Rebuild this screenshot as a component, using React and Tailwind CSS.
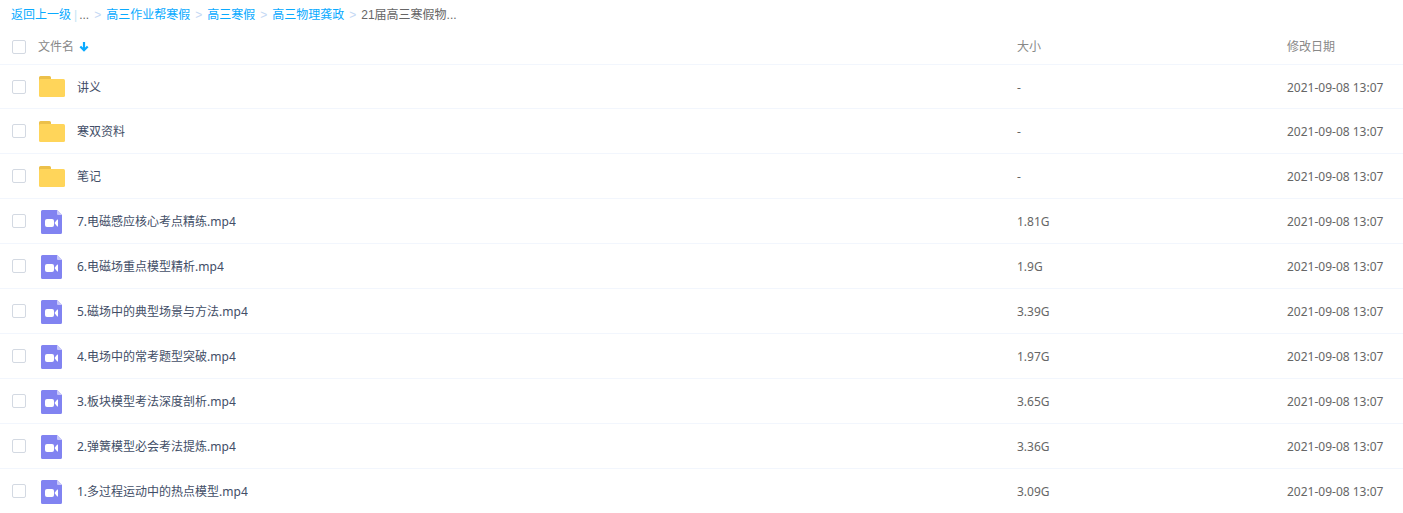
const crumbs = ["高三作业帮寒假", "高三寒假", "高三物理龚政"];

const files = [
  { name: "讲义", type: "folder", size: "-" },
  { name: "寒双资料", type: "folder", size: "-" },
  { name: "笔记", type: "folder", size: "-" },
  { name: "7.电磁感应核心考点精练.mp4", type: "video", size: "1.81G" },
  { name: "6.电磁场重点模型精析.mp4", type: "video", size: "1.9G" },
  { name: "5.磁场中的典型场景与方法.mp4", type: "video", size: "3.39G" },
  { name: "4.电场中的常考题型突破.mp4", type: "video", size: "1.97G" },
  { name: "3.板块模型考法深度剖析.mp4", type: "video", size: "3.65G" },
  { name: "2.弹簧模型必会考法提炼.mp4", type: "video", size: "3.36G" },
  { name: "1.多过程运动中的热点模型.mp4", type: "video", size: "3.09G" },
];

const FolderIcon = () => (
  <svg width="26" height="21" viewBox="0 0 26 21" aria-hidden="true">
    <path d="M0 1.5A1.5 1.5 0 0 1 1.5 0h9A1.5 1.5 0 0 1 12 1.5V6H0z" fill="#ecc04a" />
    <rect y="3" width="26" height="18" rx="1.5" fill="#ffd55a" />
  </svg>
);

const VideoIcon = () => (
  <svg width="22" height="26" viewBox="0 -2 22 26" aria-hidden="true">
    <path d="M1.500 0H16l5 5v17.500a1.500 1.500 0 0 1-1.500 1.500h-18A1.500 1.500 0 0 1 0 22.500v-21A1.500 1.500 0 0 1 1.500 0z" fill="#8183f1" />
    <path d="M16 0l5 5h-4a1 1 0 0 1-1-1z" fill="#c9c9fa" />
    <rect x="4" y="9" width="9" height="8" rx="2" fill="#fff" />
    <path d="M13.500 13L16 9.800c.4-.5 1-.3 1 .3v5.800c0 .6-.6.8-1 .3z" fill="#fff" />
  </svg>
);

const Checkbox = ({ label }) => (
  <input
    type="checkbox"
    aria-label={label}
    className="block size-[14px] shrink-0 appearance-none rounded-[2px] border border-[#d3d9e2] bg-white checked:bg-[#09aaff]"
  />
);

const Separator = () => <span className="mx-[5px] text-[#c4d8f4]">&gt;</span>;

const App = () => {
  return (
    <div className="bg-white font-['Noto_Sans','Noto_Sans_CJK_SC',sans-serif] text-xs text-[#424e67]">
      {/* Breadcrumb */}
      <nav className="flex h-7 items-center pt-0.5 pl-[11px] font-['Liberation_Sans','Noto_Sans_CJK_SC',sans-serif] whitespace-nowrap text-[#666]">
        <a href="#back" className="text-[#09aaff]">返回上一级</a>
        <span className="mr-0.5 ml-[3px] text-[#c4e4f4]">|</span>
        <a href="#more">...</a>
        {crumbs.map((crumb) => (
          <span key={crumb}>
            <Separator />
            <a href={`#${crumb}`} className="text-[#09aaff]">{crumb}</a>
          </span>
        ))}
        <Separator />
        <span>21届高三寒假物...</span>
      </nav>

      {/* File list */}
      <table className="w-full table-fixed border-separate border-spacing-0 text-left">
        <thead>
          <tr className="h-9 text-[#888] *:p-0 *:pt-0.5 *:font-normal">
            <th>
              <div className="flex items-center pl-3">
                <Checkbox label="全选" />
                <button type="button" className="ml-3 flex items-center gap-1">
                  文件名
                  <svg width="12" height="12" viewBox="0 0 12 12" fill="none" stroke="#09aaff" strokeWidth="2.200" aria-hidden="true">
                    <path d="M6 1v8.500M2.300 5.500L6 9.200l3.700-3.700" />
                  </svg>
                </button>
              </div>
            </th>
            <th className="w-[270px]">大小</th>
            <th className="w-[116px]">修改日期</th>
          </tr>
        </thead>
        <tbody>
          {files.map((file) => (
            <tr
              key={file.name}
              className="h-[45px] text-[#666] last:h-11 *:border-b *:border-[#f2f6fd] *:p-0 first:*:border-t last:*:border-b-0"
            >
              <td>
                <div className="flex items-center pl-3">
                  <Checkbox label={file.name} />
                  <span className="ml-3 flex w-7 justify-center">
                    {file.type === "folder" ? <FolderIcon /> : <VideoIcon />}
                  </span>
                  <a href={`#${file.name}`} className="ml-[11px] truncate pt-0.5 text-[#424e67]">
                    {file.name}
                  </a>
                </div>
              </td>
              <td>
                <div className="pt-0.5">{file.size}</div>
              </td>
              <td>
                <div className="pt-0.5 whitespace-nowrap">2021-09-08 13:07</div>
              </td>
            </tr>
          ))}
        </tbody>
      </table>
    </div>
  );
};

export default App;
